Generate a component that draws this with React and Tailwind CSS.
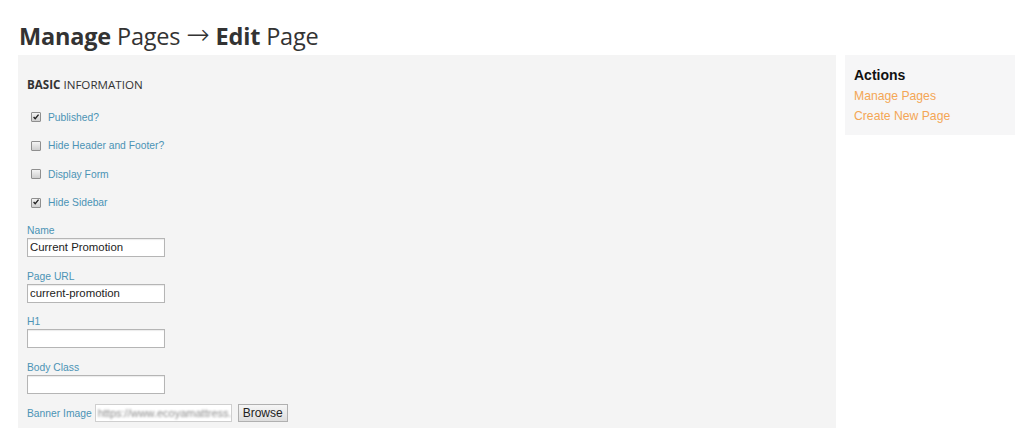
import React from 'react'

const labelCls = "mb-[1px] block text-[10.3px] leading-[13px] text-[#4b93b5]"
const inputCls = "block h-[19px] w-[138px] border border-[#b5b5b5] bg-white px-[2px] text-[11.4px] leading-[17px] text-[#222] shadow-[inset_0_1px_1px_rgba(0,0,0,0.08)]"

function Check({ checked, label }) {
  return (
    <div className="flex h-[28.5px] items-center">
      <span className="ml-[4px] flex h-[10px] w-[10px] items-center justify-center rounded-[1px] border border-[#8f8f8f] bg-gradient-to-b from-[#f4f4f4] to-[#cfcfcf]">
        {checked && (
          <svg width="10" height="10" viewBox="0 0 10 10" className="-mt-[1px]">
            <path d="M2 5 L4 7.2 L8.2 2" fill="none" stroke="#222" strokeWidth="1.7" />
          </svg>
        )}
      </span>
      <span className="ml-[7px] text-[10.3px] leading-[13px] text-[#4b93b5]">{label}</span>
    </div>
  )
}

function Field({ label, value }) {
  return (
    <div className="mb-[12.5px]">
      <label className={labelCls}>{label}</label>
      <div className={inputCls}>{value}</div>
    </div>
  )
}

export default function App() {
  return (
    <div className="min-h-[428px] bg-white pl-[18px] pt-[18px] font-['Liberation_Sans',Arial,sans-serif]">
      <h1 className="ml-[1px] flex items-baseline text-[23.5px] leading-[36px] tracking-[-0.2px] text-[#333] font-['Open_Sans',sans-serif]">
        <b className="font-bold">Manage</b>
        <span className="ml-[6px]">Pages</span>
        <span className="mx-[6px] -translate-y-[1px] font-['DejaVu_Sans',sans-serif] text-[28px] font-extralight leading-none">→</span>
        <b className="font-bold">Edit</b>
        <span className="ml-[6px]">Page</span>
      </h1>

      <div className="mt-[1px] flex items-start gap-[9px]">
        <div className="h-[373px] w-[818px] bg-[#f4f4f4] px-[9px] pt-[22px]">
          <h3 className="text-[11.6px] leading-[16px] text-[#333] font-['Open_Sans',sans-serif]">
            <b className="font-bold">BASIC</b> INFORMATION
          </h3>

          <div className="mt-[10px]">
            <Check checked label="Published?" />
            <Check label="Hide Header and Footer?" />
            <Check label="Display Form" />
            <Check checked label="Hide Sidebar" />
          </div>

          <div className="mt-[7px]">
            <Field label="Name" value="Current Promotion" />
            <Field label="Page URL" value="current-promotion" />
            <Field label="H1" value="" />
            <Field label="Body Class" value="" />
          </div>

          <div className="-mt-[2px] flex items-center">
            <span className="text-[10.3px] leading-[13px] text-[#4b93b5]">Banner Image</span>
            <div className="ml-[3px] h-[18px] w-[137px] overflow-hidden border border-[#cfcfcf] bg-white px-[2px]">
              <span className="block whitespace-nowrap text-[11px] leading-[16px] text-[#8a8a8a] blur-[1.2px]">https://www.ecoyamattress.</span>
            </div>
            <button className="ml-[6px] h-[18px] w-[50px] border border-[#b0b0b0] bg-gradient-to-b from-[#f6f6f6] to-[#dedede] text-[12px] leading-[16px] text-[#222]">
              Browse
            </button>
          </div>
        </div>

        <div className="h-[80px] w-[170px] bg-[#f6f6f7] px-[9px] pt-[12px]">
          <h4 className="text-[14px] font-bold leading-[16px] text-[#111]">Actions</h4>
          <div className="mt-[3px] flex flex-col">
            <a className="text-[12.2px] leading-[20px] text-[#f4a655]">Manage Pages</a>
            <a className="text-[12.2px] leading-[20px] text-[#f4a655]">Create New Page</a>
          </div>
        </div>
      </div>
    </div>
  )
}
